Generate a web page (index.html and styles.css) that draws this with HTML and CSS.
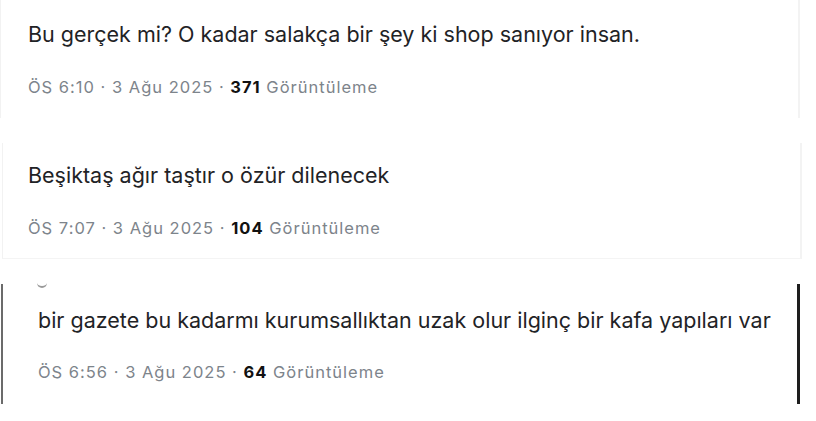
FILE: index.html
```html
<!DOCTYPE html>
<html lang="tr">
<head>
<meta charset="utf-8">
<link rel="stylesheet" href="styles.css">
</head>
<body>
<div class="page">
  <section class="shot shot-1">
    <p class="tweet">Bu gerçek mi? O kadar salakça bir şey ki shop sanıyor insan.</p>
    <p class="meta">ÖS 6:10 · 3 Ağu 2025 · <b>371</b> Görüntüleme</p>
  </section>
  <section class="shot shot-2">
    <p class="tweet">Beşiktaş ağır taştır o özür dilenecek</p>
    <p class="meta">ÖS 7:07 · 3 Ağu 2025 · <b>104</b> Görüntüleme</p>
  </section>
  <section class="shot shot-3">
    <span class="arc"></span>
    <p class="tweet">bir gazete bu kadarmı kurumsallıktan uzak olur ilginç bir kafa yapıları var</p>
    <p class="meta">ÖS 6:56 · 3 Ağu 2025 · <b>64</b> Görüntüleme</p>
  </section>
</div>
</body>
</html>
```

FILE: styles.css
```css
html, body {
  margin: 0;
  padding: 0;
  background: #ffffff;
}
body {
  width: 816px;
  height: 421px;
  overflow: hidden;
  font-family: Inter, "Noto Sans", sans-serif;
}
.page {
  display: flex;
  flex-direction: column;
  gap: 25px;
}
.shot {
  display: flex;
  flex-direction: column;
  box-sizing: border-box;
  position: relative;
}
.tweet {
  margin: 0;
  font-size: 21.5px;
  line-height: 24px;
  color: #1f2326;
  letter-spacing: 0;
}
.meta {
  margin: 0;
  font-size: 16.5px;
  line-height: 20px;
  color: #7d848b;
  letter-spacing: 1px;
}
.meta b {
  color: #111;
  font-weight: 700;
}
.shot-1 {
  width: 800px;
  height: 118px;
  padding: 22px 0 0 27px;
  border-left: 1px solid #f2f2f2;
  border-right: 2px solid #f3f3f3;
  gap: 31px;
}
.shot-2 {
  width: 800px;
  height: 116px;
  margin-left: 2px;
  padding: 20px 0 0 25px;
  border-left: 1px solid #f2f2f2;
  border-right: 2px solid #f3f3f3;
  border-bottom: 1px solid #f4f4f4;
  gap: 31px;
}
.shot-3 {
  width: 799px;
  height: 120px;
  margin-left: 1px;
  padding: 24px 0 0 35px;
  border-left: 2px solid #6b6b6b;
  border-right: 3px solid #1e1e1e;
  gap: 30px;
}
.arc {
  position: absolute;
  left: 34px;
  top: -1px;
  width: 10px;
  height: 3px;
  border-bottom: 2px solid #9a9a9a;
  border-radius: 0 0 6px 6px;
}
```
